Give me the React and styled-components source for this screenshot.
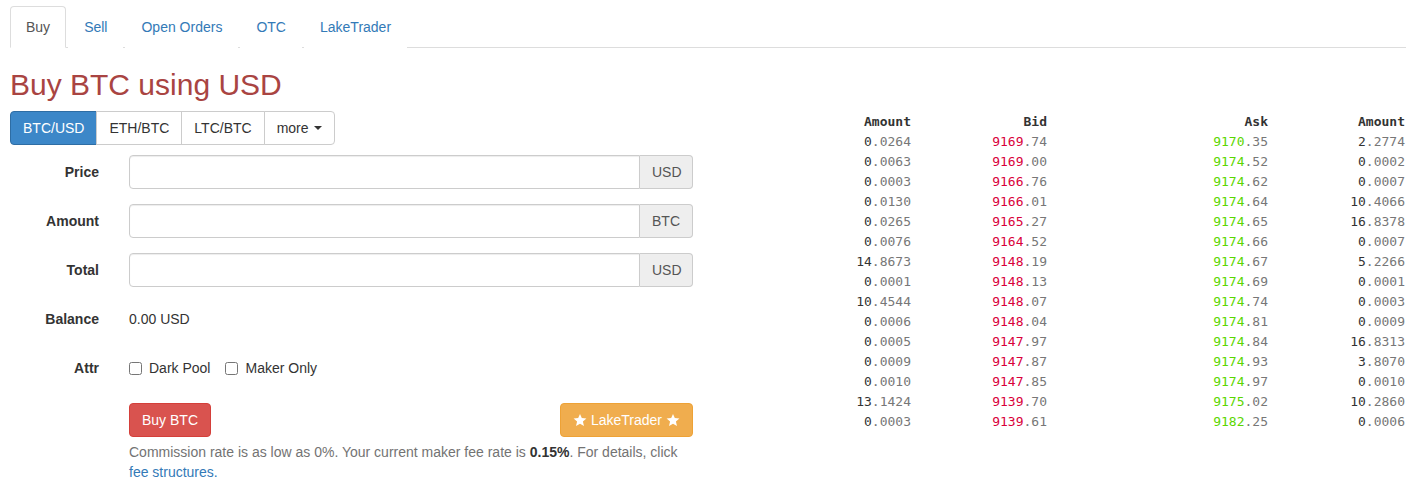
import React from "react";
import styled, { createGlobalStyle } from "styled-components";

const Global = createGlobalStyle`
  * { box-sizing: border-box; }
  body {
    margin: 0;
    font-family: "Liberation Sans", Arial, sans-serif;
    font-size: 14px;
    line-height: 1.42857;
    color: #333;
    background: #fff;
  }
`;

const Page = styled.div`
  padding: 6px 14px 0 10px;
`;

const Tabs = styled.ul`
  display: flex;
  list-style: none;
  margin: 0;
  padding: 0;
  border-bottom: 1px solid #ddd;
`;

const Tab = styled.li`
  margin-right: 2px;
  margin-bottom: -1px;
  padding: 10px 15px;
  line-height: 20px;
  border: 1px solid ${(p) => (p.$active ? "#ddd" : "transparent")};
  border-bottom-color: ${(p) => (p.$active ? "#fff" : "transparent")};
  border-radius: 4px 4px 0 0;
  background: #fff;
  color: ${(p) => (p.$active ? "#555" : "#337ab7")};
  cursor: pointer;
`;

const Body = styled.div`
  display: flex;
  align-items: flex-start;
`;

const LeftCol = styled.div`
  width: 683px;
`;

const Heading = styled.h2`
  margin: 20px 0 10px;
  font-size: 30px;
  font-weight: 500;
  line-height: 1.1;
  color: #a94442;
`;

const BtnGroup = styled.div`
  display: inline-flex;
  margin-bottom: 10px;
`;

const GroupBtn = styled.button`
  font-family: inherit;
  font-size: 14px;
  line-height: 20px;
  padding: 6px 12px;
  border: 1px solid ${(p) => (p.$active ? "#2e6da4" : "#ccc")};
  background: ${(p) => (p.$active ? "#3c87c8" : "#fff")};
  color: ${(p) => (p.$active ? "#fff" : "#333")};
  margin-left: -1px;
  border-radius: 0;
  display: inline-flex;
  align-items: center;
  gap: 4px;
  &:first-child {
    margin-left: 0;
    border-radius: 4px 0 0 4px;
  }
  &:last-child {
    border-radius: 0 4px 4px 0;
  }
`;

const Caret = styled.span`
  display: inline-block;
  width: 0;
  height: 0;
  border-top: 4px solid #333;
  border-left: 4px solid transparent;
  border-right: 4px solid transparent;
  margin-left: 1px;
`;

const FormRow = styled.div`
  display: flex;
  align-items: flex-start;
  margin-bottom: 15px;
  min-height: 34px;
`;

const Label = styled.label`
  width: 89px;
  flex: none;
  text-align: right;
  font-weight: 700;
  padding-top: 7px;
  line-height: 20px;
  margin-right: 30px;
`;

const Control = styled.div`
  flex: 1;
`;

const InputGroup = styled.div`
  display: flex;
  height: 34px;
`;

const Input = styled.input`
  flex: 1;
  height: 34px;
  padding: 6px 12px;
  font-size: 14px;
  border: 1px solid #ccc;
  border-radius: 4px 0 0 4px;
  box-shadow: inset 0 1px 1px rgba(0, 0, 0, 0.075);
  outline: none;
`;

const Addon = styled.span`
  width: 53px;
  padding: 6px 12px;
  line-height: 20px;
  font-size: 14px;
  color: #555;
  text-align: center;
  background: #eee;
  border: 1px solid #ccc;
  border-left: 0;
  border-radius: 0 4px 4px 0;
`;

const Static = styled.div`
  padding-top: 7px;
  line-height: 20px;
`;

const CheckRow = styled.div`
  display: flex;
  align-items: center;
  padding-top: 7px;
  line-height: 20px;
  gap: 15px;
`;

const CheckLabel = styled.label`
  display: inline-flex;
  align-items: center;
  cursor: pointer;
`;

const Check = styled.input`
  width: 13px;
  height: 13px;
  margin: 0 7px 0 0;
`;

const Actions = styled.div`
  margin-left: 119px;
  margin-top: 18px;
`;

const ActionRow = styled.div`
  display: flex;
  justify-content: space-between;
`;

const ActionBtn = styled.button`
  font-family: inherit;
  font-size: 14px;
  line-height: 20px;
  padding: 6px 12px;
  border-radius: 4px;
  border: 1px solid ${(p) => p.$border};
  background: ${(p) => p.$bg};
  color: #fff;
  display: inline-flex;
  align-items: center;
  gap: 4px;
`;

const Help = styled.p`
  margin: 5px 0 0;
  color: #737373;
  line-height: 20px;
  b {
    color: #333;
  }
  a {
    color: #337ab7;
    text-decoration: none;
  }
`;

const Book = styled.div`
  margin-left: auto;
  margin-right: 1px;
  margin-top: 64px;
  display: grid;
  grid-template-columns: 61px 136px 221px 137px;
  font-family: "DejaVu Sans Mono", "Liberation Mono", monospace;
  font-size: 13px;
  line-height: 20px;
`;

const Head = styled.div`
  text-align: right;
  font-weight: 700;
  color: #333;
`;

const Cell = styled.div`
  text-align: right;
  white-space: nowrap;
  color: #777;
`;

const Int = styled.span`
  color: ${(p) => p.$c};
`;

const Star = () => (
  <svg width="14" height="14" viewBox="0 0 24 24" fill="#fff">
    <path d="M12 1.5l3.1 7.2 7.9.7-6 5.2 1.8 7.7L12 18.3l-6.8 4 1.8-7.7-6-5.2 7.9-.7z" />
  </svg>
);

const rows = [
  ["0.0264", "9169.74", "9170.35", "2.2774"],
  ["0.0063", "9169.00", "9174.52", "0.0002"],
  ["0.0003", "9166.76", "9174.62", "0.0007"],
  ["0.0130", "9166.01", "9174.64", "10.4066"],
  ["0.0265", "9165.27", "9174.65", "16.8378"],
  ["0.0076", "9164.52", "9174.66", "0.0007"],
  ["14.8673", "9148.19", "9174.67", "5.2266"],
  ["0.0001", "9148.13", "9174.69", "0.0001"],
  ["10.4544", "9148.07", "9174.74", "0.0003"],
  ["0.0006", "9148.04", "9174.81", "0.0009"],
  ["0.0005", "9147.97", "9174.84", "16.8313"],
  ["0.0009", "9147.87", "9174.93", "3.8070"],
  ["0.0010", "9147.85", "9174.97", "0.0010"],
  ["13.1424", "9139.70", "9175.02", "10.2860"],
  ["0.0003", "9139.61", "9182.25", "0.0006"],
];

const colColors = ["#333", "#d9003a", "#5bd600", "#333"];

const Num = ({ v, c }) => {
  const i = v.indexOf(".");
  return (
    <Cell>
      <Int $c={c}>{v.slice(0, i)}</Int>
      {v.slice(i)}
    </Cell>
  );
};

const Field = ({ label, unit }) => (
  <FormRow>
    <Label>{label}</Label>
    <Control>
      <InputGroup>
        <Input type="text" />
        <Addon>{unit}</Addon>
      </InputGroup>
    </Control>
  </FormRow>
);

export default function App() {
  return (
    <Page>
      <Global />
      <Tabs>
        <Tab $active>Buy</Tab>
        <Tab>Sell</Tab>
        <Tab>Open Orders</Tab>
        <Tab>OTC</Tab>
        <Tab>LakeTrader</Tab>
      </Tabs>
      <Body>
        <LeftCol>
          <Heading>Buy BTC using USD</Heading>
          <BtnGroup>
            <GroupBtn $active>BTC/USD</GroupBtn>
            <GroupBtn>ETH/BTC</GroupBtn>
            <GroupBtn>LTC/BTC</GroupBtn>
            <GroupBtn>
              more <Caret />
            </GroupBtn>
          </BtnGroup>
          <Field label="Price" unit="USD" />
          <Field label="Amount" unit="BTC" />
          <Field label="Total" unit="USD" />
          <FormRow>
            <Label>Balance</Label>
            <Control>
              <Static>0.00 USD</Static>
            </Control>
          </FormRow>
          <FormRow>
            <Label>Attr</Label>
            <Control>
              <CheckRow>
                <CheckLabel>
                  <Check type="checkbox" />
                  Dark Pool
                </CheckLabel>
                <CheckLabel>
                  <Check type="checkbox" />
                  Maker Only
                </CheckLabel>
              </CheckRow>
            </Control>
          </FormRow>
          <Actions>
            <ActionRow>
              <ActionBtn $bg="#d9534f" $border="#d43f3a">
                Buy BTC
              </ActionBtn>
              <ActionBtn $bg="#f0ad4e" $border="#eea236">
                <Star /> LakeTrader <Star />
              </ActionBtn>
            </ActionRow>
            <Help>
              Commission rate is as low as 0%. Your current maker fee rate is{" "}
              <b>0.15%</b>. For details, click <a href="#">fee structures.</a>
            </Help>
          </Actions>
        </LeftCol>
        <Book>
          <Head>Amount</Head>
          <Head>Bid</Head>
          <Head>Ask</Head>
          <Head>Amount</Head>
          {rows.map((r, ri) =>
            r.map((v, ci) => <Num key={ri + "-" + ci} v={v} c={colColors[ci]} />)
          )}
        </Book>
      </Body>
    </Page>
  );
}
